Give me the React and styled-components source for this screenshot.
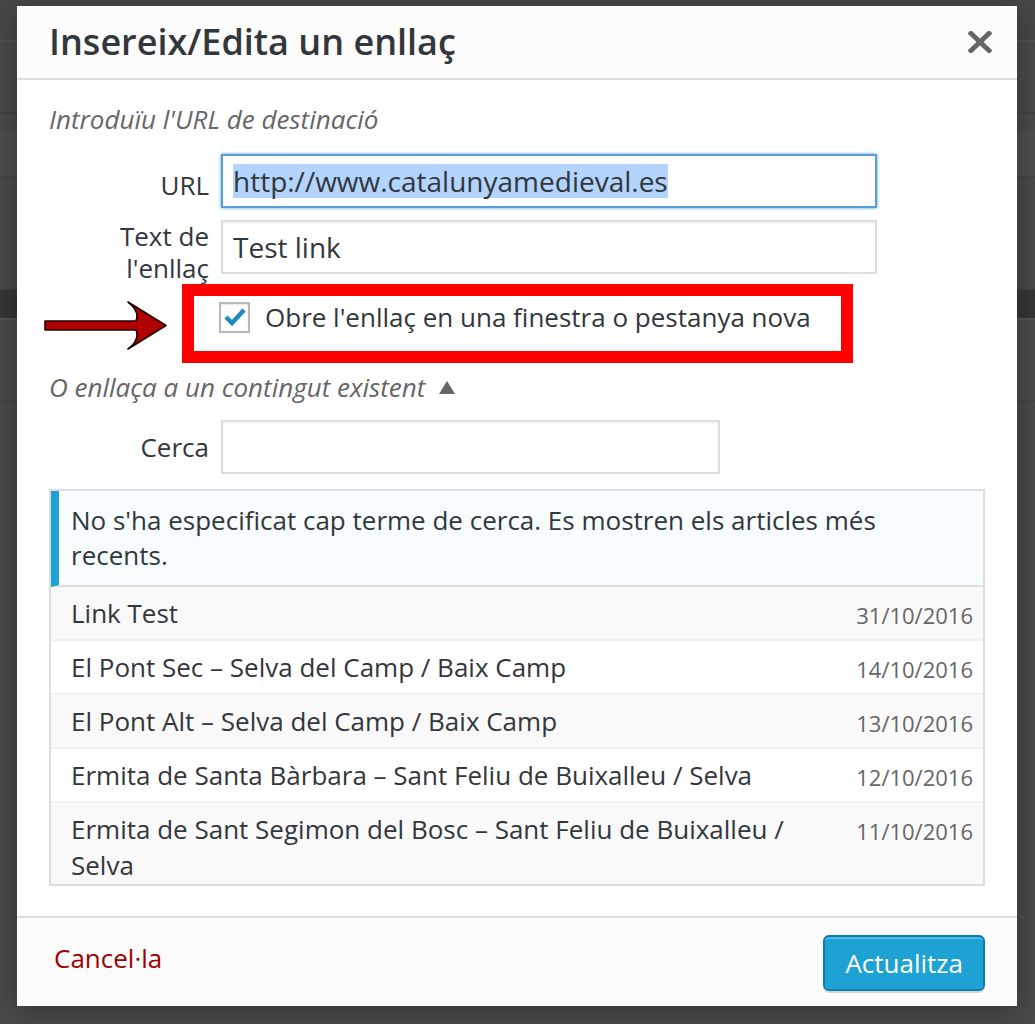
import React from 'react'
import styled, { createGlobalStyle } from 'styled-components'

const GlobalStyle = createGlobalStyle`
  html, body {
    margin: 0;
    padding: 0;
    background: #4a4a4a;
  }
  body {
    font-family: "Open Sans", "Noto Sans", sans-serif;
    color: #32373c;
  }
`

const results = [
  { title: 'Link Test', date: '31/10/2016' },
  { title: 'El Pont Sec – Selva del Camp / Baix Camp', date: '14/10/2016' },
  { title: 'El Pont Alt – Selva del Camp / Baix Camp', date: '13/10/2016' },
  { title: 'Ermita de Santa Bàrbara – Sant Feliu de Buixalleu / Selva', date: '12/10/2016' },
  { title: 'Ermita de Sant Segimon del Bosc – Sant Feliu de Buixalleu / Selva', date: '11/10/2016' },
]

// page behind the overlay, only a few faint bands show at the edges
const Backdrop = styled.div`
  position: relative;
  width: 1035px;
  height: 1024px;
  overflow: hidden;
  background: #4a4a4a;
  display: flex;
  flex-direction: column;
`

const Band = styled.div`
  height: ${p => p.$h}px;
  background: ${p => p.$bg};
  border-bottom: ${p => (p.$line ? `2px solid ${p.$line}` : 'none')};
  flex-shrink: 0;
`

const Modal = styled.div`
  position: absolute;
  left: 17px;
  top: 6px;
  width: 1000px;
  height: 1000px;
  background: #fff;
  display: flex;
  flex-direction: column;
  box-shadow: 0 6px 30px rgba(0, 0, 0, 0.3);
`

const Header = styled.div`
  height: 72px;
  flex-shrink: 0;
  background: #fcfcfc;
  border-bottom: 2px solid #dddddd;
  display: flex;
  align-items: center;
  justify-content: space-between;
  padding: 0 19px 0 32px;
`

const Title = styled.h1`
  margin: 0;
  font-size: 36px;
  font-weight: 600;
  line-height: 72px;
  color: #32373c;
`

const Close = styled.button`
  width: 36px;
  height: 36px;
  border: 0;
  padding: 0;
  background: transparent;
  display: flex;
  align-items: center;
  justify-content: center;
`

const Body = styled.div`
  flex: 1;
  padding: 0 32px;
  display: flex;
  flex-direction: column;
`

const Howto = styled.p`
  margin: ${p => p.$mt}px 0 0;
  font-size: 26px;
  line-height: 36px;
  font-style: italic;
  color: #666;
  display: flex;
  align-items: center;
  gap: 14px;
`

const FieldRow = styled.div`
  display: grid;
  grid-template-columns: 160px 1fr;
  column-gap: 12px;
  align-items: ${p => p.$align || 'start'};
  margin-top: ${p => p.$mt}px;
`

const Label = styled.label`
  font-size: 26px;
  line-height: 32px;
  color: #32373c;
  text-align: right;
  padding-top: ${p => p.$pt || 0}px;
`

const Input = styled.div`
  box-sizing: border-box;
  width: ${p => p.$w}px;
  height: ${p => p.$h || 54}px;
  border: 2px solid ${p => (p.$focus ? '#5b9dd9' : '#dddddd')};
  box-shadow: ${p => (p.$focus ? '0 0 3px rgba(30, 140, 190, 0.8)' : 'inset 0 1px 2px rgba(0, 0, 0, 0.07)')};
  background: #fff;
  padding: 0 10px;
  display: flex;
  align-items: center;
  font-size: 28px;
  color: #32373c;
  white-space: nowrap;
`

const Selected = styled.span`
  background: #b3d4fc;
  line-height: 34px;
`

const CheckRow = styled.div`
  display: flex;
  align-items: center;
  margin: 0 0 0 -5px;
`

const Arrow = styled.svg`
  width: 124px;
  height: 50px;
  flex-shrink: 0;
  margin-right: 14px;
  margin-top: 4px;
`

const Highlight = styled.div`
  box-sizing: border-box;
  width: 671px;
  height: 79px;
  border: 12px solid #ff0000;
  padding: 3px 0 0 25px;
  display: flex;
  align-items: flex-start;
`

const CheckLabel = styled.div`
  display: flex;
  align-items: center;
  gap: 15px;
  height: 36px;
  font-size: 26px;
  color: #32373c;
`

const Box = styled.span`
  box-sizing: border-box;
  width: 31px;
  height: 31px;
  border: 2px solid #b4b9be;
  background: #fff;
  box-shadow: inset 0 1px 2px rgba(0, 0, 0, 0.1);
  display: flex;
  align-items: center;
  justify-content: center;
`

const Results = styled.div`
  box-sizing: border-box;
  margin-top: 15px;
  height: 397px;
  border: 2px solid #dddddd;
  overflow: hidden;
`

const Notice = styled.div`
  background: #f7fcfe;
  border-left: 8px solid #1ea2d6;
  border-bottom: 2px solid #dddddd;
  padding: 12px 20px 12px 12px;
  font-size: 26px;
  line-height: 35px;
  color: #32373c;
`

const List = styled.ul`
  list-style: none;
  margin: 0;
  padding: 0;
`

const Item = styled.li`
  position: relative;
  padding: 8px 12px 8px 20px;
  border-bottom: 2px solid #f1f1f1;
  background: ${p => (p.$alt ? '#f9f9f9' : '#ffffff')};
  color: #32373c;
`

const ItemTitle = styled.span`
  display: inline-block;
  width: 80%;
  font-size: 26px;
  line-height: 36px;
`

const ItemDate = styled.span`
  position: absolute;
  right: 10px;
  top: 12px;
  font-size: 22px;
  line-height: 32px;
  color: #666;
`

const Footer = styled.div`
  height: 88px;
  flex-shrink: 0;
  background: #fcfcfc;
  border-top: 2px solid #dddddd;
  display: flex;
  align-items: center;
  justify-content: space-between;
  padding: 0 32px 0 37px;
`

const Cancel = styled.a`
  font-size: 26px;
  color: #a00000;
  text-decoration: none;
  margin-top: -8px;
`

const Primary = styled.button`
  box-sizing: border-box;
  height: 56px;
  padding: 0 20px;
  font-family: "Open Sans", sans-serif;
  font-size: 26px;
  color: #fff;
  background: #1ea2d3;
  border: 2px solid #0a7fae;
  border-radius: 6px;
  box-shadow: inset 0 2px 0 rgba(120, 200, 230, 0.6), 0 2px 0 rgba(0, 0, 0, 0.15);
  margin-top: 2px;
`

const Triangle = styled.span`
  width: 0;
  height: 0;
  border-left: 8px solid transparent;
  border-right: 8px solid transparent;
  border-bottom: 13px solid #666;
`

const App = () => {
  return (
    <>
      <GlobalStyle />
      <Backdrop>
        <Band $h={40} $bg="#474747" $line="#515151" />
        <Band $h={70} $bg="#4a4a4a" $line="#424242" />
        <Band $h={16} $bg="#4a4a4a" />
        <Band $h={46} $bg="#4e4e4e" $line="#454545" />
        <Band $h={110} $bg="#4a4a4a" $line="#444444" />
        <Band $h={28} $bg="#363636" $line="#555555" />
        <Band $h={80} $bg="#4b4b4b" $line="#454545" />
        <Band $h={620} $bg="#4a4a4a" />

        <Modal>
          <Header>
            <Title>Insereix/Edita un enllaç</Title>
            <Close aria-label="Tanca">
              <svg width="24" height="22" viewBox="0 0 24 22">
                <path d="M3 2.5 L21 19.5 M21 2.5 L3 19.5" stroke="#666" strokeWidth="5" strokeLinecap="square" />
              </svg>
            </Close>
          </Header>

          <Body>
            <Howto $mt={21}>Introduïu l'URL de destinació</Howto>

            <FieldRow $mt={17}>
              <Label $pt={15}>URL</Label>
              <Input $w={656} $focus>
                <Selected>http://www.catalunyamedieval.es</Selected>
              </Input>
            </FieldRow>

            <FieldRow $mt={12}>
              <Label>Text de l'enllaç</Label>
              <Input $w={656}>Test link</Input>
            </FieldRow>

            <CheckRow>
              <Arrow viewBox="0 0 124 50">
                <path
                  d="M1 20 L92 20 Q96 10 84 1 L122 24.5 L84 48 Q96 39 92 29 L1 29 Z"
                  fill="#b20000"
                  stroke="#1a0000"
                  strokeWidth="1.6"
                  strokeLinejoin="round"
                />
              </Arrow>
              <Highlight>
                <CheckLabel>
                  <Box>
                    <svg width="22" height="20" viewBox="0 0 22 20">
                      <path d="M2 10 L8 16 L20 3" fill="none" stroke="#1e8cbe" strokeWidth="4.5" />
                    </svg>
                  </Box>
                  Obre l'enllaç en una finestra o pestanya nova
                </CheckLabel>
              </Highlight>
            </CheckRow>

            <Howto $mt={6}>
              O enllaça a un contingut existent
              <Triangle />
            </Howto>

            <FieldRow $mt={15} $align="center">
              <Label>Cerca</Label>
              <Input $w={499} />
            </FieldRow>

            <Results>
              <Notice>No s'ha especificat cap terme de cerca. Es mostren els articles més recents.</Notice>
              <List>
                {results.map((r, i) => (
                  <Item key={r.date} $alt={i % 2 === 0}>
                    <ItemTitle>{r.title}</ItemTitle>
                    <ItemDate>{r.date}</ItemDate>
                  </Item>
                ))}
              </List>
            </Results>
          </Body>

          <Footer>
            <Cancel href="#">Cancel·la</Cancel>
            <Primary>Actualitza</Primary>
          </Footer>
        </Modal>
      </Backdrop>
    </>
  )
}

export default App
